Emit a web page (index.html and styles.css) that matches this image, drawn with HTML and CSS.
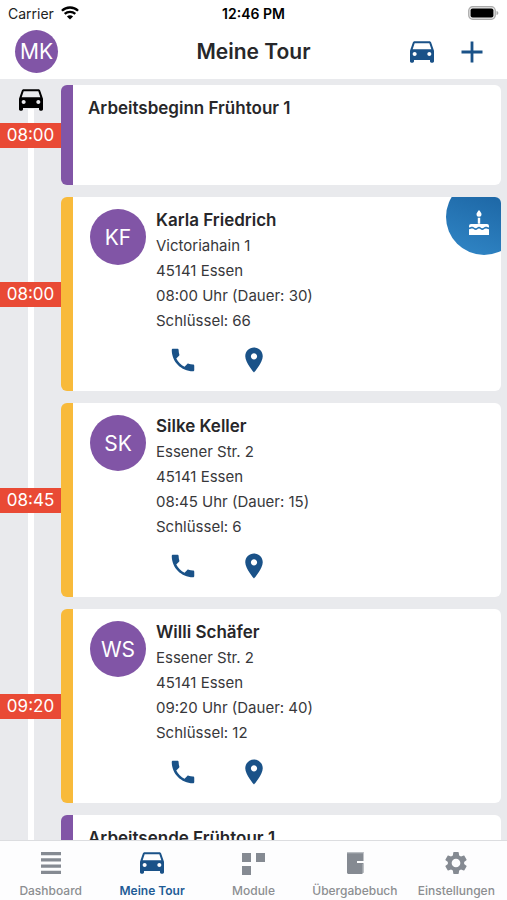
FILE: index.html
```html
<!DOCTYPE html>
<html lang="de">
<head>
<meta charset="utf-8">
<meta name="viewport" content="width=device-width, initial-scale=1">
<title>Meine Tour</title>
<link rel="stylesheet" href="styles.css">
</head>
<body>
<svg class="sprite" aria-hidden="true">
  <symbol id="car" viewBox="0 0 24 24"><path d="M18.92 5.010C18.720 4.420 18.160 4 17.500 4h-11c-.66 0-1.210.42-1.420 1.010L3 11v8c0 .55.45 1 1 1h1c.55 0 1-.45 1-1v-1h12v1c0 .55.45 1 1 1h1c.55 0 1-.45 1-1v-8l-2.080-5.990zM6.500 15c-.83 0-1.500-.67-1.500-1.500S5.670 12 6.500 12s1.500.67 1.500 1.500S7.330 15 6.500 15zm11 0c-.83 0-1.500-.67-1.500-1.500s.67-1.500 1.500-1.500 1.500.67 1.500 1.500-.67 1.500-1.500 1.500zM5 10l1.500-4.500h11L19 10H5z"/></symbol>
  <symbol id="phone" viewBox="0 0 24 24"><path d="M6.62 10.79c1.44 2.83 3.76 5.14 6.59 6.59l2.2-2.2c.27-.27.67-.36 1.02-.24 1.12.37 2.33.57 3.57.57.55 0 1 .45 1 1V20c0 .55-.45 1-1 1-9.39 0-17-7.61-17-17 0-.55.45-1 1-1h3.5c.55 0 1 .45 1 1 0 1.25.2 2.45.57 3.57.11.35.03.74-.25 1.02l-2.2 2.2z"/></symbol>
  <symbol id="pin" viewBox="0 0 24 24"><path d="M12 2C8.13 2 5 5.13 5 9c0 5.25 7 13 7 13s7-7.75 7-13c0-3.87-3.13-7-7-7zm0 9.5c-1.38 0-2.5-1.12-2.5-2.5s1.12-2.5 2.5-2.5 2.5 1.12 2.5 2.5-1.12 2.5-2.5 2.5z"/></symbol>
  <symbol id="gear" viewBox="1 1 22 22"><path d="M19.43 12.98c.04-.32.07-.64.07-.98s-.03-.66-.07-.98l2.11-1.65c.19-.15.24-.42.12-.64l-2-3.46c-.12-.22-.39-.3-.61-.22l-2.49 1c-.52-.4-1.08-.73-1.69-.98l-.38-2.65C14.46 2.18 14.25 2 14 2h-4c-.25 0-.46.18-.49.42l-.38 2.65c-.61.25-1.17.59-1.69.98l-2.49-1c-.23-.09-.49 0-.61.22l-2 3.46c-.13.22-.07.49.12.64l2.11 1.65c-.04.32-.07.65-.07.98s.03.66.07.98l-2.11 1.65c-.19.15-.24.42-.12.64l2 3.46c.12.22.39.3.61.22l2.49-1c.52.4 1.08.73 1.69.98l.38 2.65c.03.24.24.42.49.42h4c.25 0 .46-.18.49-.42l.38-2.65c.61-.25 1.17-.59 1.69-.98l2.49 1c.23.09.49 0 .61-.22l2-3.46c.12-.22.07-.49-.12-.64l-2.11-1.65zM12 16c-2.2 0-4-1.8-4-4s1.8-4 4-4 4 1.8 4 4-1.8 4-4 4z"/></symbol>
</svg>

<div class="app">
  <div class="status">
    <div class="carrier">Carrier
      <svg width="18" height="14" viewBox="0 0 18 14" aria-hidden="true"><g fill="none" stroke="#000" stroke-width="2.3"><path d="M.9 4.8C5.4.4 12.6.4 17.1 4.8"/><path d="M3.7 7.9c3-2.8 7.6-2.8 10.6 0"/></g><path d="M9 13.6L5.9 10.4c1.7-1.6 4.5-1.6 6.2 0z"/></svg>
    </div>
    <div class="clock">12:46 PM</div>
    <div class="battery">
      <svg width="31" height="14" viewBox="0 0 31 14" aria-hidden="true"><rect x=".7" y=".7" width="26.6" height="12.6" rx="4" fill="#e4e4e4" stroke="#aaa" stroke-width="1.2"/><rect x="2.6" y="2.5" width="22.8" height="9" rx="2"/><path d="M28.5 5c2.4.6 2.4 3.4 0 4z" fill="#aaa"/></svg>
    </div>
  </div>

  <header class="header">
    <button class="avatar avatar-small" aria-label="Profil">MK</button>
    <h1>Meine Tour</h1>
    <div class="header-actions">
      <button class="icon-button" aria-label="Fahrt"><svg class="car-icon"><use href="#car"/></svg></button>
      <button class="icon-button" aria-label="Hinzufügen"><svg width="22" height="22" viewBox="0 0 22 22"><path d="M11 .5v21M.5 11h21" fill="none" stroke="#1a5288" stroke-width="2.8"/></svg></button>
    </div>
  </header>

  <main class="tour">
    <article class="stop">
      <div class="rail"><svg class="car-icon start"><use href="#car"/></svg><time>08:00</time></div>
      <div class="card shift"><h2>Arbeitsbeginn Frühtour 1</h2></div>
    </article>
    <article class="stop">
      <div class="rail"><time>08:00</time></div>
      <div class="card">
        <div class="avatar">KF</div>
        <div class="details">
          <h2>Karla Friedrich</h2>
          <p>Victoriahain 1</p><p>45141 Essen</p><p>08:00 Uhr (Dauer: 30)</p><p>Schlüssel: 66</p>
          <div class="actions"><button class="icon-button" aria-label="Anrufen"><svg><use href="#phone"/></svg></button><button class="icon-button" aria-label="Karte"><svg><use href="#pin"/></svg></button></div>
        </div>
        <div class="birthday">
          <svg width="22" height="26" viewBox="0 0 22 26" aria-hidden="true"><g fill="#fff"><path d="M11 0c1.5 2 2.5 3 2.5 4.300a2.500 2.500 0 0 1-5 0C8.500 3 9.500 2 11 0zM9.800 7.700h2.400v6H9.800zM1 16a2 2 0 0 1 2-2h16a2 2 0 0 1 2 2v1.500c-1.700 0-1.900-.7-3.300-.7-1.600 0-1.800 1.500-3.400 1.500s-1.700-1.500-3.300-1.500-1.700 1.500-3.300 1.500-1.800-1.500-3.400-1.500c-1.400 0-1.600.7-3.300.7zM1 19.200c1.700 0 2-.7 3.300-.7 1.600 0 1.800 1.500 3.400 1.500s1.700-1.500 3.300-1.500 1.700 1.500 3.300 1.500 1.800-1.500 3.400-1.500c1.300 0 1.600.7 3.300.7V25H1z"/></g></svg>
        </div>
      </div>
    </article>
    <article class="stop">
      <div class="rail"><time>08:45</time></div>
      <div class="card">
        <div class="avatar">SK</div>
        <div class="details">
          <h2>Silke Keller</h2>
          <p>Essener Str. 2</p><p>45141 Essen</p><p>08:45 Uhr (Dauer: 15)</p><p>Schlüssel: 6</p>
          <div class="actions"><button class="icon-button" aria-label="Anrufen"><svg><use href="#phone"/></svg></button><button class="icon-button" aria-label="Karte"><svg><use href="#pin"/></svg></button></div>
        </div>
      </div>
    </article>
    <article class="stop">
      <div class="rail"><time>09:20</time></div>
      <div class="card">
        <div class="avatar">WS</div>
        <div class="details">
          <h2>Willi Schäfer</h2>
          <p>Essener Str. 2</p><p>45141 Essen</p><p>09:20 Uhr (Dauer: 40)</p><p>Schlüssel: 12</p>
          <div class="actions"><button class="icon-button" aria-label="Anrufen"><svg><use href="#phone"/></svg></button><button class="icon-button" aria-label="Karte"><svg><use href="#pin"/></svg></button></div>
        </div>
      </div>
    </article>
    <article class="stop">
      <div class="rail"></div>
      <div class="card shift"><h2>Arbeitsende Frühtour 1</h2></div>
    </article>
  </main>

  <nav class="tabs">
    <a href="#dashboard"><svg viewBox="0 0 24 24"><path d="M2 1h20v3.300H2zM2 7.300h20v3.300H2zM2 13.500h20v3.300H2zM2 19.700h20V23H2z"/></svg>Dashboard</a>
    <a href="#tour" class="active" aria-current="page"><svg class="car-icon"><use href="#car"/></svg>Meine Tour</a>
    <a href="#module"><svg viewBox="0 0 24 24"><path d="M1 2h9v9H1zM15 2h9v9h-9zM1 15h9v9H1z"/></svg>Module</a>
    <a href="#buch"><svg viewBox="0 0 24 24"><path d="M4 1h16.500v9H14v2h6.500v9.500L19 23H5l-1-1z"/><path d="M4 1h16v1.300H4z" fill="#b9bdc2"/><path d="M19.500 13v9h1v-9z" fill="#b9bdc2"/></svg>Übergabebuch</a>
    <a href="#einstellungen"><svg><use href="#gear"/></svg>Einstellungen</a>
  </nav>
</div>
</body>
</html>
```
FILE: styles.css
```css
* { box-sizing: border-box; }

body {
  margin: 0;
  font-family: Inter, "Liberation Sans", sans-serif;
  color: #27272a;
  background: #fff;
}

h1, h2, p { margin: 0; }

button {
  font: inherit;
  padding: 0;
  border: 0;
  background: none;
}

.sprite { display: none; }

.app {
  display: flex;
  flex-direction: column;
  height: 100vh;
}

.status {
  display: grid;
  grid-template-columns: 1fr auto 1fr;
  align-items: center;
  height: 28px;
  padding: 0 8px 2px;
  font-size: 14px;
  color: #222;
}

.carrier {
  display: flex;
  align-items: center;
  gap: 7px;
}

.clock {
  font-weight: 600;
  color: #000;
}

.battery {
  display: flex;
  justify-content: flex-end;
}

.header {
  display: grid;
  grid-template-columns: 1fr auto 1fr;
  align-items: center;
  height: 51px;
  padding: 0 15px 4px;
}

.header h1 {
  font-size: 21px;
  font-weight: 600;
}

.header-actions {
  display: flex;
  align-items: center;
  justify-content: flex-end;
  gap: 23px;
  padding-right: 9px;
}

.icon-button {
  display: flex;
  color: #1a5288;
  fill: currentColor;
}

.car-icon {
  width: 32px;
  height: 32px;
}

.avatar {
  display: flex;
  align-items: center;
  justify-content: center;
  flex: none;
  width: 56px;
  height: 56px;
  border-radius: 50%;
  background: #8155a6;
  color: #fff;
  font-size: 21px;
}

.avatar-small {
  width: 43px;
  height: 43px;
}

.tour {
  display: flex;
  flex-direction: column;
  flex: 1;
  min-height: 0;
  overflow: hidden;
  padding: 6px 6px 0 0;
  background: #e9eaed;
}

.stop {
  display: grid;
  grid-template-columns: 61px 1fr;
  flex: none;
  padding-bottom: 12px;
}

/* The line runs through the row gap as well. */
.rail {
  position: relative;
  display: flex;
  align-items: center;
  margin-bottom: -12px;
  padding-bottom: 12px;
  background: linear-gradient(#fff, #fff) 28px 0 / 6px 100% no-repeat;
}

.stop:first-child .rail { background-position-y: 24px; }

.rail time {
  width: 100%;
  background: #e94a35;
  color: #fff;
  font-size: 17px;
  line-height: 25px;
  text-align: center;
}

.start {
  position: absolute;
  top: -1px;
  left: 15px;
}

.card {
  position: relative;
  display: flex;
  gap: 10px;
  min-height: 194px;
  padding: 12px 12px 12px 17px;
  border-left: 12px solid #f8ba3b;
  border-radius: 6px;
  overflow: hidden;
  background: #fff;
}

.shift {
  min-height: 100px;
  padding-left: 15px;
  border-left-color: #8155a6;
}

.card h2 {
  font-size: 17px;
  line-height: 22px;
  font-weight: 600;
}

.details p {
  color: #38383b;
  font-size: 15px;
  line-height: 25px;
}

.details h2 + p { margin-top: 2px; }

.actions {
  display: flex;
  gap: 41px;
  padding: 12px 12px 4px;
}

.actions svg {
  width: 30px;
  height: 30px;
}

.birthday {
  position: absolute;
  top: -18px;
  right: -21px;
  display: flex;
  align-items: center;
  justify-content: center;
  width: 76px;
  height: 76px;
  padding: 12px 10px 0 0;
  border-radius: 50%;
  background: linear-gradient(20deg, #3187c7, #175d9b);
}

.tabs {
  display: grid;
  grid-template-columns: repeat(5, 1fr);
  height: 60px;
  border-top: 1px solid #dcdde0;
  background: #fdfdfe;
}

.tabs a {
  display: flex;
  flex-direction: column;
  align-items: center;
  justify-content: space-between;
  padding: 10px 0 2px;
  color: #8c8e91;
  fill: #858a92;
  font-size: 12px;
  line-height: 15px;
  font-weight: 500;
  text-decoration: none;
}

.tabs svg {
  width: 24px;
  height: 24px;
}

.tabs .car-icon {
  width: 32px;
  height: 32px;
  margin: -4px;
}

.tabs .active {
  color: #1f5c96;
  fill: #1a5288;
  font-weight: 600;
}
```
